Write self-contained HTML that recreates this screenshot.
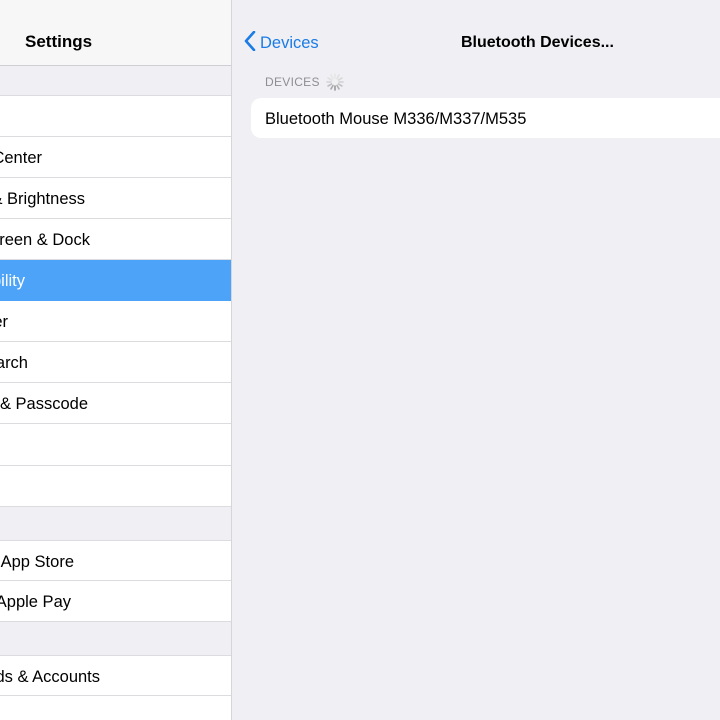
<!DOCTYPE html>
<html><head><meta charset="utf-8"><style>
*{margin:0;padding:0;box-sizing:border-box}
html,body{width:720px;height:720px;overflow:hidden}
body{background:#efeff4;font-family:"Liberation Sans",sans-serif;position:relative}
.left{position:absolute;left:0;top:0;width:232px;height:720px;background:#efeff4;border-right:1px solid #d6d6da;overflow:hidden}
.hdr{position:absolute;left:0;top:0;width:231px;height:66px;background:#f7f7f7;border-bottom:1px solid #cfcfd3}
.hdr span{position:absolute;left:25px;top:32px;font-size:17px;font-weight:bold;color:#000}
.row{position:absolute;left:0;width:231px;height:41px;background:#fff;border-bottom:1px solid #dcdce0;font-size:16.5px;color:#000;overflow:hidden}
.row span{position:absolute;top:12px;white-space:nowrap;text-align:right}
.sel{background:#4da3f8;color:#fff;border-bottom:none}
.topb{border-top:1px solid #dcdce0}
.nav{position:absolute;left:243px;top:31px;font-size:16.5px;color:#1a7ce6}
.title{position:absolute;left:461px;top:34px;font-size:16px;font-weight:bold}
.sec{position:absolute;left:265px;top:75px;font-size:12px;color:#8e8e93;letter-spacing:.3px}
.dev{position:absolute;left:251px;top:98px;width:469px;height:40px;background:#fff;border-radius:10px 0 0 10px}
.dev span{position:absolute;left:14px;top:12px;font-size:16.5px;color:#000}
</style></head><body>
<div class="left">
<div class="hdr"><span>Settings</span></div>
<div class="row topb" style="top:95px;height:42px"></div>
<div class="row" style="top:137px"><span style="right:189px">Control Center</span></div>
<div class="row" style="top:178px"><span style="right:146px">Display &amp; Brightness</span></div>
<div class="row" style="top:219px"><span style="right:141px">Home Screen &amp; Dock</span></div>
<div class="row sel" style="top:260px"><span style="right:206px">Accessibility</span></div>
<div class="row" style="top:301px"><span style="right:223px">Wallpaper</span></div>
<div class="row" style="top:342px"><span style="right:203px">Siri &amp; Search</span></div>
<div class="row" style="top:383px"><span style="right:143px">Touch ID &amp; Passcode</span></div>
<div class="row" style="top:424px;height:42px"></div>
<div class="row" style="top:466px"></div>
<div class="row topb" style="top:540px"><span style="right:157px">iTunes &amp; App Store</span></div>
<div class="row" style="top:581px"><span style="right:160px">Wallet &amp; Apple Pay</span></div>
<div class="row topb" style="top:655px"><span style="right:131px">Passwords &amp; Accounts</span></div>
<div class="row" style="top:696px;height:24px;border-bottom:none"></div>
</div>
<div class="nav"><svg width="14" height="20" viewBox="0 0 14 20" style="vertical-align:-3px;margin-right:3px"><path d="M11 1 L3 10 L11 19" fill="none" stroke="#1a7ce6" stroke-width="2.6" stroke-linecap="round" stroke-linejoin="round"/></svg>Devices</div>
<div class="title">Bluetooth Devices...</div>
<div class="sec">DEVICES</div>
<svg style="position:absolute;left:325px;top:72px" width="20" height="20" viewBox="-10 -10 20 20">
<g stroke-width="1.6" stroke-linecap="round">
<line x1="0" y1="-4" x2="0" y2="-8" stroke="#e6e6e6" transform="rotate(0)"/>
<line x1="0" y1="-4" x2="0" y2="-8" stroke="#e0e0e0" transform="rotate(30)"/>
<line x1="0" y1="-4" x2="0" y2="-8" stroke="#d8d8d8" transform="rotate(60)"/>
<line x1="0" y1="-4" x2="0" y2="-8" stroke="#d0d0d0" transform="rotate(90)"/>
<line x1="0" y1="-4" x2="0" y2="-8" stroke="#c4c4c4" transform="rotate(120)"/>
<line x1="0" y1="-4" x2="0" y2="-8" stroke="#b0b0b0" transform="rotate(150)"/>
<line x1="0" y1="-4" x2="0" y2="-8" stroke="#999" transform="rotate(180)"/>
<line x1="0" y1="-4" x2="0" y2="-8" stroke="#aaa" transform="rotate(210)"/>
<line x1="0" y1="-4" x2="0" y2="-8" stroke="#c0c0c0" transform="rotate(240)"/>
<line x1="0" y1="-4" x2="0" y2="-8" stroke="#d4d4d4" transform="rotate(270)"/>
<line x1="0" y1="-4" x2="0" y2="-8" stroke="#e0e0e0" transform="rotate(300)"/>
<line x1="0" y1="-4" x2="0" y2="-8" stroke="#e6e6e6" transform="rotate(330)"/>
</g></svg>
<div class="dev"><span>Bluetooth Mouse M336/M337/M535</span></div>
</body></html>
